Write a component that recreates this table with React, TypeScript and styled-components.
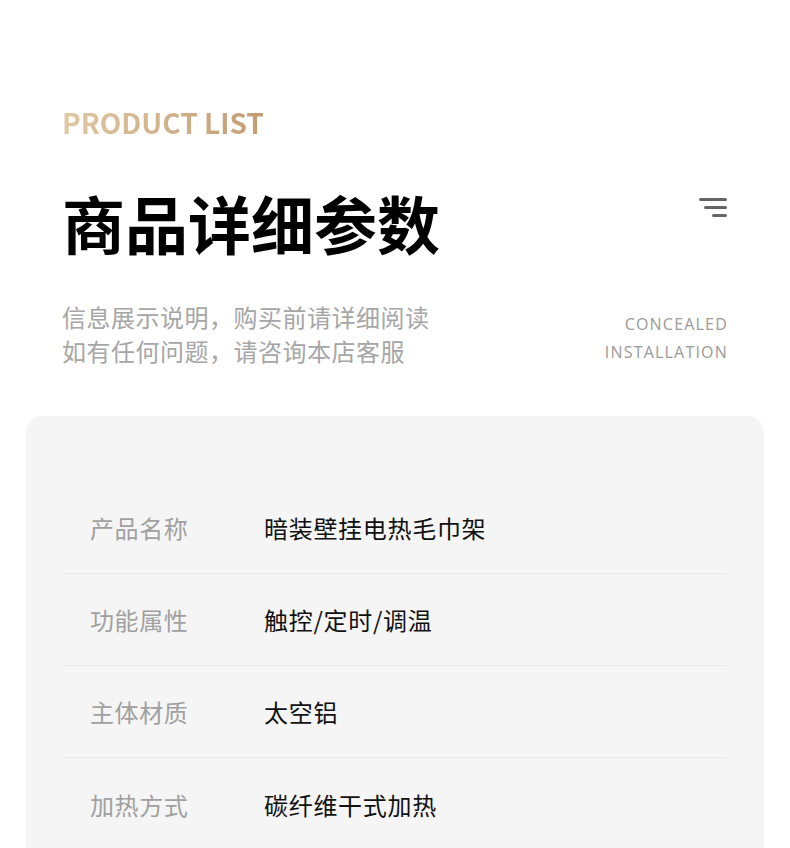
import React from 'react';
import styled, {createGlobalStyle} from 'styled-components';

const GlobalStyle = createGlobalStyle`
  html, body {
    margin: 0;
    padding: 0;
    background: #ffffff;
  }
  body {
    font-family: "Noto Sans CJK SC", "Noto Sans", sans-serif;
    -webkit-font-smoothing: antialiased;
  }
`;

const specs = [
  {label: '产品名称', value: '暗装壁挂电热毛巾架'},
  {label: '功能属性', value: '触控/定时/调温'},
  {label: '主体材质', value: '太空铝'},
  {label: '加热方式', value: '碳纤维干式加热'},
];

const App = () => {
  return (
    <Page>
      <GlobalStyle />
      <Header>
        <Eyebrow>PRODUCT LIST</Eyebrow>
        <TitleRow>
          <Title>商品详细参数</Title>
          <MenuIcon width="28" height="20" viewBox="0 0 28 20">
            <rect x="0" y="0" width="28" height="3" rx="1.5" />
            <rect x="5" y="8" width="23" height="3" rx="1.5" />
            <rect x="13" y="16" width="15" height="3" rx="1.5" />
          </MenuIcon>
        </TitleRow>
        <IntroRow>
          <Intro>
            信息展示说明，购买前请详细阅读
            <br />
            如有任何问题，请咨询本店客服
          </Intro>
          <Tagline>
            CONCEALED
            <br />
            INSTALLATION
          </Tagline>
        </IntroRow>
      </Header>

      <SpecCard>
        {specs.map((s, i) => (
          <SpecRow key={s.label} last={i === specs.length - 1}>
            <SpecLabel>{s.label}</SpecLabel>
            <SpecValue>{s.value}</SpecValue>
          </SpecRow>
        ))}
      </SpecCard>
    </Page>
  );
};

const Page = styled.div`
  width: 790px;
  min-height: 848px;
  overflow: hidden;
  background: #fff;
`;

const Header = styled.div`
  padding: 102px 63px 0 62px;
  display: flex;
  flex-direction: column;
`;

const Eyebrow = styled.div`
  font-family: "Noto Sans CJK SC", "Noto Sans", sans-serif;
  font-size: 28px;
  line-height: 40px;
  font-weight: 600;
  letter-spacing: 0;
  background: linear-gradient(90deg, #e0c8a4 0%, #c49c72 100%);
  -webkit-background-clip: text;
  background-clip: text;
  color: transparent;
  width: fit-content;
`;

const TitleRow = styled.div`
  margin-top: 40px;
  display: flex;
  justify-content: space-between;
  align-items: flex-start;
`;

const Title = styled.h1`
  margin: 0;
  font-size: 63px;
  line-height: 80px;
  font-weight: 700;
  color: #000;
`;

const MenuIcon = styled.svg`
  margin-top: 16px;
  fill: #666;
`;

const IntroRow = styled.div`
  margin-top: 38px;
  display: flex;
  justify-content: space-between;
  align-items: flex-end;
`;

const Intro = styled.p`
  margin: 0;
  font-size: 24px;
  line-height: 34px;
  letter-spacing: 0.5px;
  color: #a6a6a6;
`;

const Tagline = styled.div`
  padding-bottom: 2px;
  text-align: right;
  font-family: "Open Sans", "Noto Sans", sans-serif;
  font-size: 16px;
  line-height: 28px;
  letter-spacing: 1.2px;
  margin-right: -1px;
  color: #9a9a9a;
`;

const SpecCard = styled.div`
  margin: 48px 26px 0;
  padding: 66px 37px 40px;
  background: #f5f5f5;
  border-radius: 16px;
`;

const SpecRow = styled.div<{last?: boolean}>`
  height: 92px;
  box-sizing: border-box;
  display: grid;
  grid-template-columns: 174px 1fr;
  align-items: center;
  padding-left: 27px;
  border-bottom: ${p => (p.last ? 'none' : '1px solid #e8e8e8')};
`;

const SpecLabel = styled.span`
  font-size: 24px;
  letter-spacing: 0.6px;
  color: #a0a0a0;
`;

const SpecValue = styled.span`
  font-size: 24px;
  letter-spacing: 0.7px;
  color: #111;
`;

export default App;
